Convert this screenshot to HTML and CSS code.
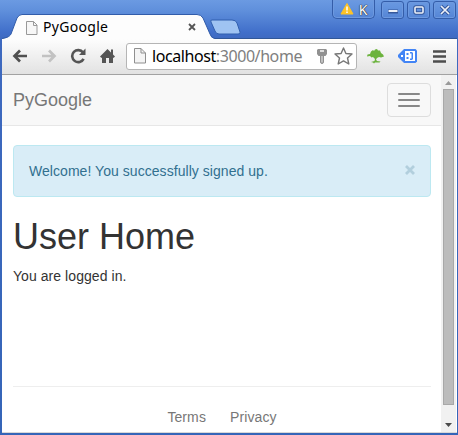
FILE: index.html
```html
<!DOCTYPE html>
<html lang="en">
<head>
<meta charset="utf-8">
<title>PyGoogle</title>
<link rel="stylesheet" href="styles.css">
</head>
<body>
<div class="window">
  <header class="titlebar">
    <div class="tab">
      <svg class="tab-shape" width="213" height="25" viewBox="0 0 213 25"><path d="M0 25C4 24 7 23.500 9 20L15 4Q17 .5 20 .5H195Q199 .5 201 4L208 20Q209 24 213 25Z" fill="#fdfdfd"/><path d="M0 24.500C4 23.500 7 23.500 9 20L15 4Q17 .5 20 .5H195Q199 .5 201 4L208 20Q209 24 213 24.500" fill="none" stroke="#315caa"/></svg>
      <svg class="tab-page" width="12" height="14" viewBox="0 0 12 14"><path d="M.5.5H7.500L11 4V13.500H.5Z" fill="#f7f7f7" stroke="#999"/><path d="M7.500.5V4.500H11" fill="none" stroke="#999"/></svg>
      <span class="tab-title">PyGoogle</span>
      <svg class="tab-close" width="8" height="8" viewBox="0 0 8 8"><path d="M1 1 7 7M7 1 1 7" stroke="#555" stroke-width="1.800"/></svg>
    </div>
    <svg class="new-tab" width="33" height="17" viewBox="0 0 33 17"><path d="M3 1H23Q27 1 28 4L31 13Q32 15 29 15H10Q7 15 6 12L2 3Q1 1 3 1Z" fill="#9fc3f2" stroke="#315fae"/></svg>
    <div class="controls">
      <div class="control profile">
        <svg width="14" height="12" viewBox="0 0 14 12"><path d="M7 .5 13 11H1Z" fill="#fdc326" stroke="#fdc326" stroke-linejoin="round"/><path d="M7 3.500V7.500M7 8.500V10" stroke="#fff" stroke-width="1.500"/></svg>
        <span>K</span>
      </div>
      <div class="control"><svg width="12" height="12" viewBox="0 0 12 12"><path d="M1 7.500H11" stroke="#35579a" stroke-width="4"/><path d="M1.500 7H10.500" stroke="#edf1f8" stroke-width="2"/></svg></div>
      <div class="control"><svg width="12" height="12" viewBox="0 0 12 12"><rect x="2" y="3" width="8" height="6" rx="1" fill="none" stroke="#35579a" stroke-width="3.500"/><rect x="2" y="3" width="8" height="6" rx="1" fill="none" stroke="#edf1f8" stroke-width="1.600"/></svg></div>
      <div class="control"><svg width="12" height="12" viewBox="0 0 12 12"><path d="M2 2 10 10M10 2 2 10" stroke="#35579a" stroke-width="3.500"/><path d="M2 2 10 10M10 2 2 10" stroke="#edf1f8" stroke-width="1.700"/></svg></div>
    </div>
  </header>

  <div class="toolbar">
    <svg class="back" width="16" height="14" viewBox="0 0 16 14"><path d="M8 1.500 2.500 7 8 12.500M3 7H15" fill="none" stroke="#505050" stroke-width="2.700"/></svg>
    <svg class="forward" width="16" height="14" viewBox="0 0 16 14"><path d="M8 1.500 13.500 7 8 12.500M13 7H1" fill="none" stroke="#c2c2c2" stroke-width="2.700"/></svg>
    <svg class="reload" width="17" height="16" viewBox="0 0 17 16"><path d="M13 4.500A6 6 0 1 0 13.600 10.800" fill="none" stroke="#555" stroke-width="2.600"/><path d="M15.500.5V7H9Z" fill="#555"/></svg>
    <svg class="home" width="15" height="16" viewBox="0 0 15 16"><path d="M7.500 1 0 8.500 1.500 10 2 9.500V15H6V10H9V15H13V9.500L13.500 10 15 8.500 13 6.500V1.500H11V4.500Z" fill="#555"/></svg>
    <div class="address">
      <svg class="address-page" width="12" height="16" viewBox="0 0 12 16"><path d="M.5.5H7L11.500 5V15H.5Z" fill="#f4f4f4" stroke="#8f8f8f"/><path d="M7 .5V5H11.500" fill="none" stroke="#8f8f8f"/></svg>
      <span class="url"><b>localhost</b>:3000/home</span>
      <svg class="key" width="10" height="15" viewBox="0 0 10 15"><path d="M1 0H9L10 1V5L8.500 7H7V13.500L5.500 15H4.500L3 13.500V7H1.500L0 5V1Z" fill="#919191"/><path d="M3 2H7" stroke="#fff" stroke-width="1.400"/><path d="M5 7V13.500" stroke="#eee"/></svg>
      <svg class="star" width="19" height="18" viewBox="0 0 19 18"><path d="M9.500 1 11.900 6.500 18 7 13.500 11 14.800 17 9.500 13.900 4.200 17 5.500 11 1 7 7.100 6.500Z" fill="#fff" stroke="#777" stroke-width="1.400" stroke-linejoin="round"/></svg>
    </div>
    <svg class="tree" width="17" height="15" viewBox="0 0 17 15"><path d="M4 2.500 6 1 7 2 8 .5 10 0 11 1.500 13 1.500 14 4 16 5.500 17 7.500 14 8.500 12 8 10 9 9 10.500 10 12 13.500 12.500 12.500 13.500H8L7 14.500 6 13.500 4 13 7.500 12 8 10 6 8 4.500 8.500 3 7 0 7.500.5 5.500 3 5Z" fill="#6cb33e"/></svg>
    <svg class="tag" width="19" height="14" viewBox="0 0 19 14"><path d="M6 0H17.500L19 1.500V12.500L17.500 14H6L0 8V6Z" fill="#4385f5"/><path d="M3 6H5V8H3Z" fill="#fff"/><path d="M7 2H17V12H7Z" fill="#fff"/><path d="M8.500 4H10.500V6H8.500ZM8.500 8H10.500V10H8.500ZM12 3H14L15 4V10L14 11H12V9.500H13.500V4.500H12Z" fill="#4385f5"/></svg>
    <svg class="menu" width="13" height="13" viewBox="0 0 13 13"><path d="M0 1.500H13M0 6.500H13M0 11.500H13" stroke="#4d4d4d" stroke-width="2.600"/></svg>
  </div>

  <div class="viewport">
    <div class="page">
      <nav class="navbar">
        <span class="brand">PyGoogle</span>
        <div class="toggle"><i></i><i></i><i></i></div>
      </nav>
      <main class="container">
        <div class="alert">
          <span>Welcome! You successfully signed up.</span>
          <svg width="10" height="10" viewBox="0 0 10 10"><path d="M1 1 9 9M9 1 1 9" stroke="#b2cfdd" stroke-width="2.800"/></svg>
        </div>
        <h1>User Home</h1>
        <p>You are logged in.</p>
      </main>
      <footer class="footer"><span>Terms</span><span>Privacy</span></footer>
    </div>
    <div class="scrollbar">
      <svg width="15" height="14" viewBox="0 0 15 14"><path d="M4 10 7.500 6 11 10Z" fill="#999"/></svg>
      <div class="thumb"></div>
      <svg class="down" width="15" height="14" viewBox="0 0 15 14"><path d="M4 5H11L7.500 9Z" fill="#4b4b4b"/></svg>
    </div>
  </div>
</div>
</body>
</html>
```
FILE: styles.css
```css
* { box-sizing: border-box; }
body { margin: 0; overflow: hidden; }
svg { display: block; flex: none; }
.window {
  width: 458px;
  height: 435px;
  padding: 0 1px 2px 2px;
  display: flex;
  flex-direction: column;
  background: linear-gradient(#6b9ae2 0, #6090dc 10px, #416fca 32px, #3e69bf 40px, #3565b8 100%);
  font-family: "Liberation Sans", Arial, sans-serif;
}
.titlebar {
  height: 39px;
  flex: none;
  display: flex;
  border-bottom: 1px solid #315798;
}
.tab {
  position: relative;
  width: 213px;
  height: 25px;
  margin-top: 14px;
  padding: 0 19px 0 24px;
  display: flex;
  align-items: center;
  font-family: "Noto Sans", sans-serif;
}
.tab-shape { position: absolute; left: 0; top: 0; }
.tab-page, .tab-title, .tab-close { position: relative; }
.tab-page { top: 1px; }
.tab-title {
  margin-left: 5px;
  font-size: 14px;
  line-height: 20px;
  letter-spacing: 0.3px;
  color: #000;
}
.tab-close { margin-left: auto; }
.new-tab { margin: 19px 0 0 -6px; }
.controls {
  display: flex;
  gap: 3px;
  margin-left: auto;
  margin-right: 1px;
}
.control {
  width: 23px;
  height: 18px;
  margin-top: 1px;
  border: 1px solid #345da9;
  border-radius: 3px;
  box-shadow: inset 0 0 0 1px #6d99df;
  display: flex;
  align-items: center;
  justify-content: center;
}
.profile {
  width: 43px;
  height: 19px;
  margin-top: 0;
  margin-right: 3px;
  border-top: 0;
  border-radius: 0 0 5px 5px;
  gap: 5px;
  font: 14px/18px "Noto Sans", sans-serif;
  color: #fff;
  text-shadow: 0 0 1px #333, 0 0 1px #333, 0 0 1px #333;
}
.profile span { padding-top: 2px; }
.toolbar {
  height: 36px;
  flex: none;
  display: flex;
  align-items: center;
  padding: 0 10px 1px;
  background: linear-gradient(#fdfdfd, #e2e2e2);
  border-bottom: 1px solid #a2a2a2;
}
.forward { margin-left: 13px; }
.reload { margin-left: 13px; }
.home { margin-left: 13px; }
.address {
  width: 231px;
  height: 27px;
  margin-left: 11px;
  padding: 0 3px 0 7px;
  display: flex;
  align-items: center;
  background: #fff;
  border: 1px solid #b5b5b5;
  border-radius: 3px;
}
.url {
  margin-left: 6px;
  font: 16px/22px "Noto Sans", sans-serif;
  letter-spacing: -0.42px;
  white-space: nowrap;
  color: #808080;
}
.url b { font-weight: 400; color: #000; }
.key { margin-left: auto; }
.star { margin-left: 7px; }
.tree { margin-left: 10px; }
.tag { margin-left: 14px; }
.menu { margin-left: auto; margin-right: 1px; }
.viewport {
  flex: 1;
  display: flex;
  background: #fff;
  border-bottom: 1px solid #d8d8d8;
}
.page {
  width: 439px;
  display: flex;
  flex-direction: column;
}
.navbar {
  height: 51px;
  padding: 0 10px 0 11px;
  display: flex;
  align-items: center;
  justify-content: space-between;
  background: #f8f8f8;
  border-bottom: 1px solid #e7e7e7;
}
.brand { font-size: 18px; line-height: 20px; color: #777; }
.toggle {
  width: 44px;
  height: 34px;
  display: flex;
  flex-direction: column;
  align-items: center;
  justify-content: center;
  gap: 4px;
  border: 1px solid #ddd;
  border-radius: 4px;
}
.toggle i { width: 22px; height: 2px; background: #888; border-radius: 1px; }
.container { flex: 1; padding: 19px 10px 0 11px; color: #333; }
.alert {
  height: 52px;
  padding: 0 15px;
  display: flex;
  align-items: center;
  justify-content: space-between;
  background: #d9edf7;
  border: 1px solid #bce8f1;
  border-radius: 4px;
  color: #31708f;
  font-size: 14px;
  line-height: 20px;
  letter-spacing: 0.05px;
}
.alert svg { margin-top: -3px; }
h1 { margin: 20px 0 10px; font-size: 36px; font-weight: 500; line-height: 39px; }
p { margin: 0; font-size: 14px; line-height: 20px; letter-spacing: 0.06px; }
.footer {
  height: 46px;
  margin: 0 10px 0 11px;
  padding-top: 20px;
  display: flex;
  justify-content: center;
  gap: 24px;
  border-top: 1px solid #eee;
  font-size: 14px;
  line-height: 20px;
  letter-spacing: 0.1px;
  color: #777;
}
.scrollbar {
  width: 15px;
  display: flex;
  flex-direction: column;
  background: #f1f1f1;
}
.thumb {
  width: 11px;
  height: 316px;
  margin-left: 2px;
  background: #bcbcbc;
  border: 1px solid #a8a8a8;
}
.down { margin-top: auto; }
```
